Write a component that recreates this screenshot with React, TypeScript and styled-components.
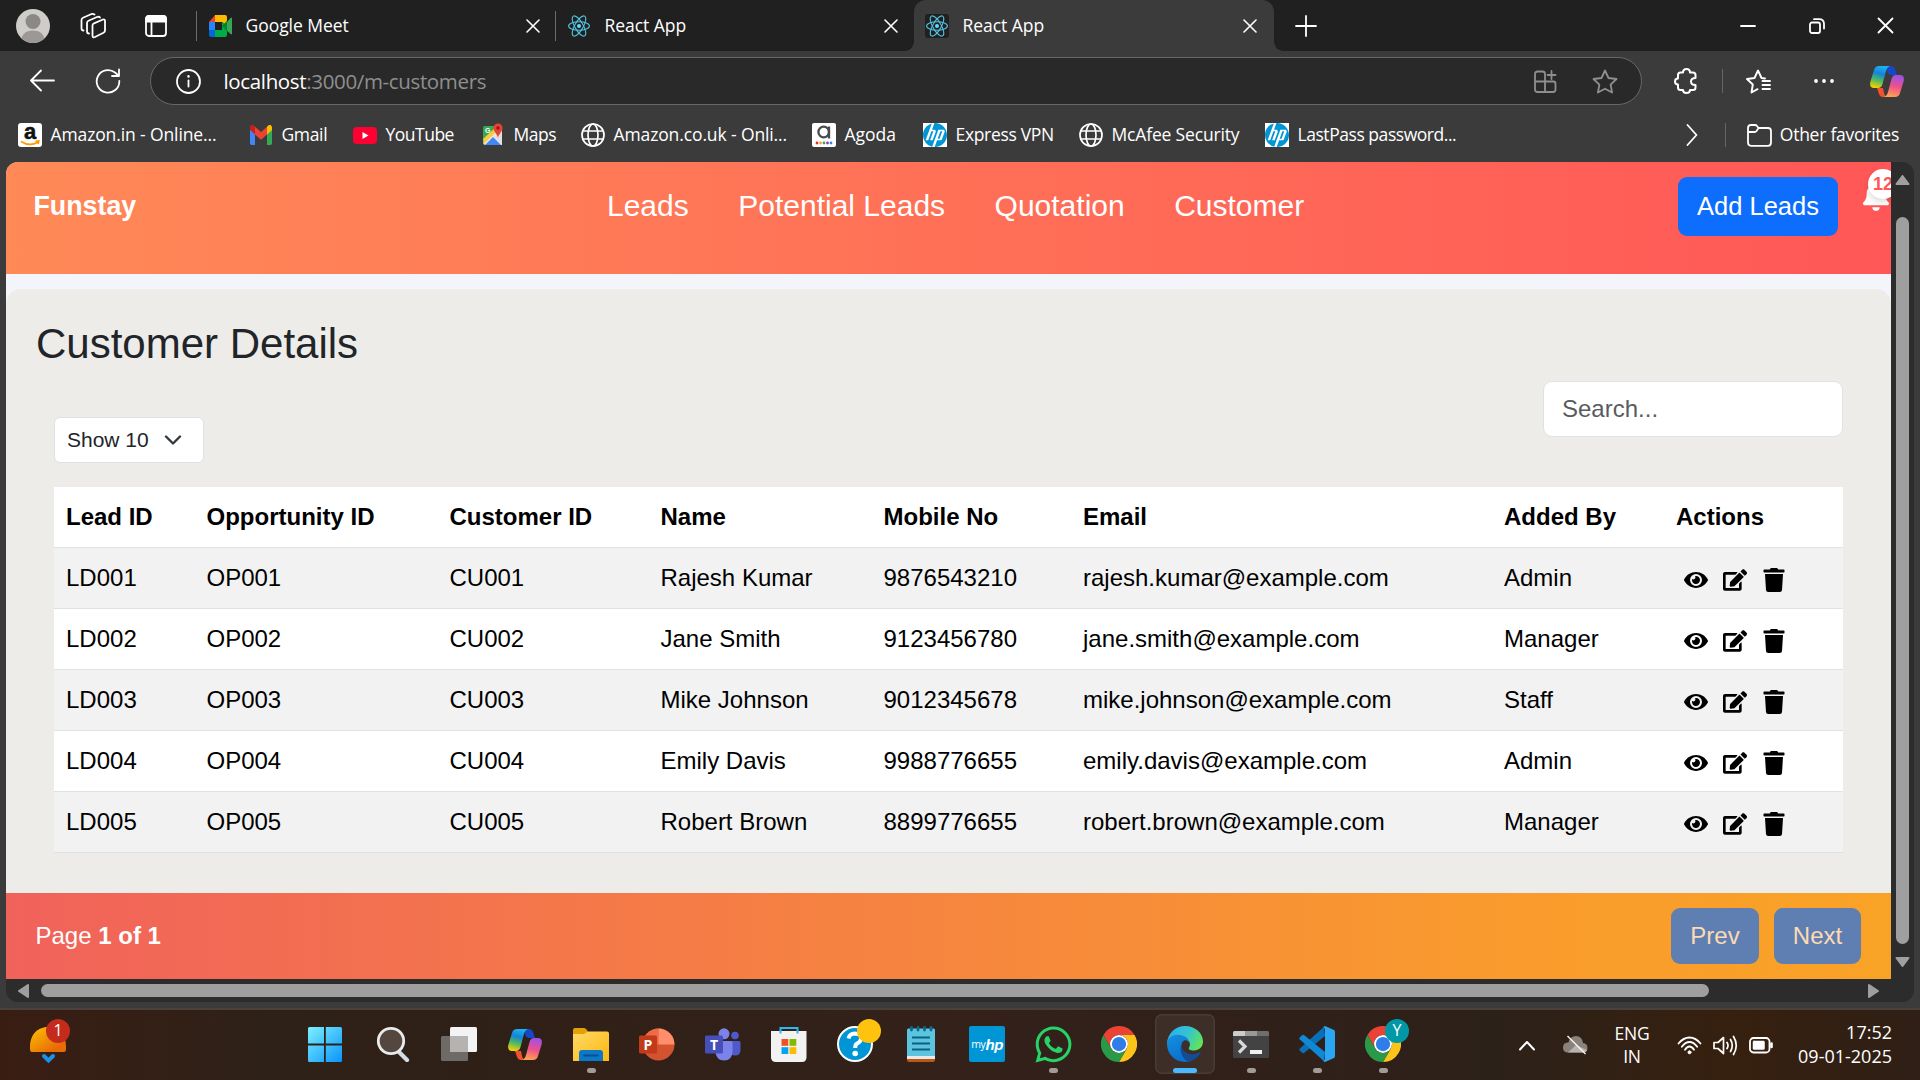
import React from "react";
import styled, { createGlobalStyle, css } from "styled-components";
import { FaEye, FaEdit, FaTrash, FaBell, FaWhatsapp } from "react-icons/fa";
import { SiHp } from "react-icons/si";

const GlobalStyle = createGlobalStyle`
  * { box-sizing: border-box; }
  html, body { margin: 0; padding: 0; overflow: hidden; background: #3b3b3b; }
  svg { display: block; flex: none; }
`;

const ui = `"Open Sans", "Noto Sans", sans-serif`;
const arial = `"Liberation Sans", Arial, sans-serif`;

const Screen = styled.div`
  width: 1920px;
  height: 1080px;
  display: flex;
  flex-direction: column;
  background: #3b3b3b;
  font-family: ${ui};
  color: #fff;
  overflow: hidden;
`;

/* ---------- browser chrome ---------- */

const TabStrip = styled.div`
  height: 51px;
  display: flex;
  align-items: center;
  background: #202020;
`;

const Slot = styled.div<{ $w: number }>`
  width: ${(p) => p.$w}px;
  height: 100%;
  display: flex;
  align-items: center;
  justify-content: center;
  flex: none;
`;

const TabItem = styled.div<{ $active?: boolean; $w: number }>`
  position: relative;
  width: ${(p) => p.$w}px;
  height: 51px;
  display: flex;
  align-items: center;
  gap: 13.5px;
  padding: 0 16px 0 11px;
  flex: none;
  ${(p) =>
    p.$active
      ? css`
          background: #3b3b3b;
          border-radius: 12px 12px 0 0;
          padding: 0 17px 0 11px;
          &::before,
          &::after {
            content: "";
            position: absolute;
            bottom: 0;
            width: 9px;
            height: 9px;
          }
          &::before {
            left: -9px;
            background: radial-gradient(circle at 0 0, transparent 8.5px, #3b3b3b 9px);
          }
          &::after {
            right: -9px;
            background: radial-gradient(circle at 100% 0, transparent 8.5px, #3b3b3b 9px);
          }
        `
      : css`
          &::before {
            content: "";
            position: absolute;
            left: -1px;
            top: 11px;
            width: 1px;
            height: 30px;
            background: #6b6b6b;
          }
        `}
`;

const TabTitle = styled.span`
  flex: 1;
  padding-bottom: 1px;
  font-size: 17.5px;
  letter-spacing: -0.05px;
  white-space: nowrap;
`;

const FavTile = styled.span<{ $tile?: boolean }>`
  width: 24px;
  height: 24px;
  display: flex;
  align-items: center;
  justify-content: center;
  border-radius: 3px;
  background: ${(p) => (p.$tile ? "#202020" : "transparent")};
`;

const Toolbar = styled.div`
  height: 60px;
  display: flex;
  align-items: center;
`;

const AddressBar = styled.div`
  width: 1492px;
  height: 48px;
  border: 1.5px solid #686868;
  border-radius: 24px;
  background: #292929;
  display: flex;
  align-items: center;
  padding: 0 23px 0 25px;
`;

const Url = styled.span`
  flex: 1;
  margin-left: 22.5px;
  font-size: 20.5px;
  letter-spacing: -0.35px;
  color: #8f8f8f;
  b {
    font-weight: 400;
    color: #fff;
  }
`;

const AddressIcons = styled.div`
  display: flex;
  align-items: center;
  gap: 35px;
`;

const Rule = styled.span`
  width: 1px;
  height: 24px;
  background: #666;
`;

const BookmarkBar = styled.div`
  height: 51px;
  padding: 0 21px 3px 18px;
  display: flex;
  align-items: center;
`;

const BookmarkItem = styled.div<{ $w: number }>`
  width: ${(p) => p.$w}px;
  display: flex;
  align-items: center;
  gap: 8.5px;
  flex: none;
`;

const BookmarkIcon = styled.span`
  width: 24px;
  display: flex;
  justify-content: center;
  flex: none;
`;

const BookmarkText = styled.span<{ $ls?: number }>`
  font-size: 17.5px;
  letter-spacing: ${(p) => p.$ls ?? -0.25}px;
  white-space: nowrap;
  padding-bottom: 2px;
`;

const BookmarkEnd = styled.div`
  margin-left: auto;
  display: flex;
  align-items: center;
  gap: 8px;
`;

const BookmarkArrow = styled.div`
  display: flex;
  align-items: center;
  gap: 27px;
  margin-right: 13px;
`;

const IconTile = styled.span<{ $round?: number }>`
  width: 24px;
  height: 24px;
  border-radius: ${(p) => p.$round ?? 0}px;
  background: #fff;
  color: #0096d6;
  display: flex;
  flex: none;
`;

/* ---------- page viewport ---------- */

const Viewport = styled.div`
  width: 1908px;
  height: 840px;
  margin-left: 6px;
  display: grid;
  grid-template-columns: 1885px 23px;
  grid-template-rows: 817px 23px;
  background: #2c2c2c;
  border-radius: 12px;
  overflow: hidden;
  flex: none;
`;

const Page = styled.main`
  overflow: hidden;
  background: #f3f5fa;
  font-family: ${arial};
  display: flex;
  flex-direction: column;
`;

const Header = styled.header`
  height: 112px;
  margin-bottom: 15px;
  padding: 15px 0 0 27.5px;
  display: flex;
  align-items: flex-start;
  background: linear-gradient(90deg, #ff8957, #ff5757);
  flex: none;
`;

const Brand = styled.div`
  width: 573.5px;
  font-size: 26.8px;
  font-weight: 700;
  line-height: 58px;
`;

const Nav = styled.nav`
  display: flex;
  gap: 49.5px;
  font-size: 30px;
  line-height: 58px;
  white-space: nowrap;
`;

const AddButton = styled.button`
  width: 160px;
  height: 59px;
  margin-left: auto;
  border: 0;
  border-radius: 9px;
  background: #0d6efd;
  color: #fff;
  font: 25.5px ${arial};
  padding: 0;
  flex: none;
`;

const BellBox = styled.div`
  position: relative;
  width: 28px;
  margin-left: 25px;
  padding-top: 4px;
  flex: none;
  svg {
    width: 26px;
    height: 30px;
  }
`;

const BellBadge = styled.span`
  position: absolute;
  left: 5px;
  top: -8px;
  width: 30px;
  height: 30px;
  border-radius: 50%;
  background: #fff;
  color: #ff5757;
  font-size: 18px;
  font-weight: 700;
  line-height: 30px;
  padding-left: 5px;
  box-shadow: 0 3px 6px rgba(0, 0, 0, 0.15);
`;

const Panel = styled.section`
  height: 604px;
  padding: 0 48px;
  background: #edece8;
  border-radius: 15px 15px 0 0;
  flex: none;
`;

const Title = styled.h2`
  margin: 0 0 0 -18px;
  padding-top: 30px;
  height: 92px;
  font-size: 42px;
  font-weight: 400;
  line-height: 50px;
  color: #212529;
`;

const Controls = styled.div`
  height: 106px;
  display: flex;
  justify-content: space-between;
`;

const PageSize = styled.div`
  width: 150px;
  height: 46px;
  margin-top: 36px;
  padding: 0 21px 0 12px;
  display: flex;
  align-items: center;
  justify-content: space-between;
  border: 1.5px solid #dee2e6;
  border-radius: 6px;
  background: #fff;
  color: #212529;
  font-size: 21px;
`;

const Search = styled.input`
  width: 300px;
  height: 56px;
  padding: 0 18px;
  border: 1.5px solid #dee2e6;
  border-radius: 9px;
  background: #fff;
  font: 24px ${arial};
  &::placeholder {
    color: #595c5f;
    opacity: 1;
  }
`;

const Table = styled.table`
  width: 1789px;
  table-layout: fixed;
  border-collapse: separate;
  border-spacing: 0;
  font-size: 24px;
  color: #000;
`;

const Cell = styled.td<{ $striped?: boolean }>`
  height: 61px;
  padding: 0 12px;
  line-height: 36px;
  background: ${(p) => (p.$striped ? "#f2f2f2" : "#fff")};
  border-bottom: 1px solid #dee2e6;
  white-space: nowrap;
`;

const HeadCell = styled(Cell)`
  font-weight: 700;
  text-align: left;
`;

const Actions = styled.div`
  display: flex;
  align-items: center;
  gap: 15px;
  padding: 4px 0 0 8px;
`;

const Footer = styled.footer`
  height: 86px;
  padding: 0 30px 0 29.5px;
  display: flex;
  align-items: center;
  gap: 15px;
  background: linear-gradient(90deg, #f1625b, #f99a2e 78%, #f9a326);
  font-size: 24px;
  flex: none;
`;

const PageInfo = styled.div`
  flex: 1;
`;

const PagerButton = styled.button<{ $w: number }>`
  width: ${(p) => p.$w}px;
  height: 56px;
  padding: 0;
  border: 0;
  border-radius: 9px;
  background: #5f7fb3;
  color: #fddab0;
  font: 24px ${arial};
`;

const VBar = styled.div`
  display: flex;
  flex-direction: column;
  align-items: center;
  padding-top: 13px;
`;

const VThumb = styled.div`
  width: 13px;
  height: 727px;
  margin: 32px 0 13px;
  border-radius: 7px;
  background: #9f9f9f;
`;

const HBar = styled.div`
  grid-column: 1 / 3;
  display: flex;
  align-items: center;
  padding-left: 12px;
`;

const HThumb = styled.div`
  width: 1668px;
  height: 13px;
  margin: 0 159px 0 12px;
  border-radius: 7px;
  background: #9f9f9f;
`;

/* ---------- taskbar ---------- */

const Taskbar = styled.div`
  height: 72px;
  margin-top: 6px;
  border-top: 2px solid #4b403a;
  background: linear-gradient(90deg, #391d13 0, #2e2118 14%, #302017 30%, #33211a 50%, #30201a 68%, #2c2119 78%, #36200f 90%, #2f1f16 100%);
  display: flex;
  flex: none;
`;

const Widgets = styled.div`
  position: relative;
  width: 292px;
  padding: 17px 0 0 30px;
`;

const Badge = styled.span<{ $x: number; $y: number; $bg: string }>`
  position: absolute;
  left: ${(p) => p.$x}px;
  top: ${(p) => p.$y}px;
  width: 24px;
  height: 24px;
  border-radius: 50%;
  background: ${(p) => p.$bg};
  font-size: 16px;
  line-height: 23px;
  text-align: center;
`;

const TaskButton = styled.div<{ $active?: boolean }>`
  position: relative;
  width: 60px;
  height: 60px;
  margin: 4px 3px;
  display: flex;
  align-items: center;
  justify-content: center;
  border-radius: 7px;
  flex: none;
  &:nth-child(2) {
    margin-right: 5px;
  }
  ${(p) =>
    p.$active &&
    css`
      background: #3d2e27;
      box-shadow: inset 0 0 0 1.5px #493c35;
    `}
`;

const RunMark = styled.span<{ $active?: boolean }>`
  position: absolute;
  bottom: 1px;
  left: ${(p) => (p.$active ? 18 : 25.5)}px;
  width: ${(p) => (p.$active ? 24 : 9)}px;
  height: 5px;
  border-radius: 3px;
  background: ${(p) => (p.$active ? "#4cb8ff" : "#a39b96")};
`;

const MyHp = styled.div`
  width: 36px;
  height: 36px;
  border-radius: 2px;
  background: #0096d6;
  display: flex;
  align-items: center;
  justify-content: center;
  font-size: 10.5px;
  letter-spacing: -0.3px;
  b {
    font: italic 700 15px ${arial};
    letter-spacing: -0.5px;
  }
`;

const Tray = styled.div`
  margin-left: auto;
  padding-right: 28px;
  height: 70px;
  display: flex;
  align-items: center;
  font-size: 18px;
  line-height: 24px;
  letter-spacing: 0;
`;

const Lang = styled.div`
  width: 40px;
  margin: 0 25px 0 24px;
  text-align: center;
  font-size: 17.5px;
  line-height: 23px;
  letter-spacing: -0.2px;
`;

const TrayIcons = styled.div`
  display: flex;
  align-items: center;
  gap: 11px;
  width: 114px;
`;

const Clock = styled.div`
  width: 101px;
  text-align: right;
  padding-bottom: 3px;
`;

/* ---------- drawings ---------- */

const stroke = { fill: "none", stroke: "#fff", strokeWidth: 1.8, strokeLinecap: "round", strokeLinejoin: "round" } as const;

const CloseX = () => (
  <svg width="14" height="14" viewBox="0 0 14 14" {...stroke} strokeWidth={1.6}>
    <path d="M1 1 13 13M13 1 1 13" />
  </svg>
);

const ReactLogo = () => (
  <svg width="22" height="24" viewBox="-11 -12 22 24" fill="none" stroke="#52c1de" strokeWidth="1.1">
    <circle r="2" fill="#61dafb" stroke="none" />
    <ellipse rx="10.400" ry="4.200" />
    <ellipse rx="11.400" ry="4.200" transform="rotate(60)" />
    <ellipse rx="11.400" ry="4.200" transform="rotate(120)" />
  </svg>
);

const MeetLogo = () => (
  <svg width="23" height="22" viewBox="0 0 23 19" preserveAspectRatio="none">
    <path d="M6 0V6H0Z" fill="#ea4335" />
    <path d="M0 6H6V13H0Z" fill="#2684fc" />
    <path d="M0 13H6V19H2Q0 19 0 17Z" fill="#0066da" />
    <path d="M6 0H16Q18 0 18 2V9.500L13 6H6Z" fill="#ffba00" />
    <path d="M6 19H16Q18 19 18 17V9.500L13 6V13H6Z" fill="#00ac47" />
    <path d="M18 6 21.500 2.500Q23 1.800 23 3V16Q23 17.200 21.500 16.500L18 13.500Z" fill="#34a853" />
    <path d="M13 9.500 18 5V14Z" fill="#00832d" />
  </svg>
);

const Avatar = () => (
  <svg width="34" height="34" viewBox="0 0 34 34">
    <clipPath id="av"><circle cx="17" cy="17" r="17" /></clipPath>
    <g clipPath="url(#av)">
      <rect width="34" height="34" fill="#cfcdca" />
      <circle cx="17" cy="12.500" r="7.500" fill="#8b8885" />
      <path d="M5 34C5 25 10 21.500 17 21.500S29 25 29 34Z" fill="#9b9895" />
    </g>
  </svg>
);

const Workspaces = () => (
  <svg width="26" height="26" viewBox="0 0 26 26" {...stroke}>
    <path d="M12.500 12.500Q12.500 11 14 10.300L23 6.500Q25 6 25 8V17.500Q25 19 23.500 19.800L15 24Q12.500 25 12.500 22.500Z" />
    <path d="M9 20.500Q7 20.500 7 18.500V10Q7 8.500 8.500 7.800L17 4Q19 3.300 20 4.500" />
    <path d="M3.500 17.500Q1.500 17.500 1.500 15.500V7Q1.500 5.500 3 4.800L11 1.200Q13 .5 14.500 1.500" />
  </svg>
);

const VerticalTabs = () => (
  <svg width="22" height="22" viewBox="0 0 22 22" {...stroke}>
    <rect x="1" y="1" width="20" height="20" rx="3" />
    <path d="M1 6.500V4Q1 1 4 1H18Q21 1 21 4V6.500Z" fill="#fff" />
    <path d="M6.500 7V20.500" />
  </svg>
);

const Globe = () => (
  <svg width="24" height="24" viewBox="0 0 24 24" {...stroke} strokeWidth={1.7}>
    <circle cx="12" cy="12" r="11" />
    <ellipse cx="12" cy="12" rx="5" ry="11" />
    <path d="M2 8H22M2 16H22" />
  </svg>
);

const AmazonLogo = () => (
  <IconTile $round={3}>
    <svg width="24" height="24" viewBox="0 0 24 24" overflow="visible">
      <text x="12" y="15.500" textAnchor="middle" fontFamily="Liberation Sans" fontWeight="700" fontSize="22" fill="#111" stroke="#111" strokeWidth=".5">a</text>
      <path d="M3 18.500Q11.500 24 20 19M17.500 18.300 20.800 18 20 21" fill="none" stroke="#ff9900" strokeWidth="1.700" />
    </svg>
  </IconTile>
);

const GmailLogo = () => (
  <svg width="22" height="20" viewBox="0 0 22 17" preserveAspectRatio="none">
    <path d="M0 3V15.500Q0 17 1.500 17H5V7Z" fill="#4285f4" />
    <path d="M22 3V15.500Q22 17 20.500 17H17V7Z" fill="#34a853" />
    <path d="M17 1.500V8L22 4.200V2.300C22 0 19.500-.8 18 .6Z" fill="#fbbc04" />
    <path d="M5 8V1.500L11 6 17 1.500V8L11 12.500Z" fill="#ea4335" />
    <path d="M0 2.300V4.200L5 8V1.500L4 .6C2.500-.8 0 0 0 2.300Z" fill="#c5221f" />
  </svg>
);

const YouTubeLogo = () => (
  <svg width="24" height="17" viewBox="0 0 24 17">
    <rect width="24" height="17" rx="4" fill="#ff0033" />
    <path d="M9.500 5V12L15.500 8.500Z" fill="#fff" />
  </svg>
);

const MapsLogo = () => (
  <svg width="22" height="24" viewBox="0 0 22 24">
    <rect x="1" y="3" width="19" height="19" rx="1.500" fill="#34a853" />
    <path d="M1 20 18 4 20 6V22H3Z" fill="#e8eaed" />
    <path d="M3 22 11 14 19 22Z" fill="#4285f4" />
    <path d="M1 16 14 4 17 6 2 21Z" fill="#fbcc3b" />
    <path d="M11.500 13.500 20 22V9Z" fill="#dfe1e5" />
    <text x="3" y="10" fontFamily="Liberation Sans" fontWeight="700" fontSize="7" fill="#fff">G</text>
    <path d="M16 15C15.500 11 11.500 9 11.500 5A4.500 4.500 0 0 1 20.500 5C20.500 9 16.500 11 16 15Z" fill="#ea4335" />
    <circle cx="16" cy="5" r="1.700" fill="#8e1a12" />
  </svg>
);

const AgodaLogo = () => (
  <IconTile $round={2}>
    <svg width="24" height="24" viewBox="0 0 24 24">
      <circle cx="11.700" cy="9" r="5.300" fill="none" stroke="#4a4a4c" strokeWidth="2.300" />
      <path d="M17 3.500V15.500" stroke="#4a4a4c" strokeWidth="2.300" />
      {["#e12d2d", "#f5a623", "#33a852", "#8e3bb5", "#3a85e0"].map((c, i) => (
        <circle key={c} cx={5 + i * 3.500} cy="20" r="1.400" fill={c} />
      ))}
    </svg>
  </IconTile>
);

const HpLogo = () => (
  <IconTile><SiHp size={24} /></IconTile>
);

const Copilot = ({ id }: { id: string }) => (
  <svg width="34" height="31" viewBox="0 0 34 31">
    <defs>
      <linearGradient id={id + "a"} x1=".6" y1="0" x2=".35" y2="1">
        <stop offset="0" stopColor="#1db4f0" /><stop offset=".35" stopColor="#1683d8" /><stop offset=".65" stopColor="#4bb866" /><stop offset="1" stopColor="#f5d000" />
      </linearGradient>
      <linearGradient id={id + "b"} x1=".6" y1="0" x2=".4" y2="1">
        <stop offset="0" stopColor="#9a52e8" /><stop offset=".5" stopColor="#ee4f8d" /><stop offset="1" stopColor="#ffa350" />
      </linearGradient>
    </defs>
    <path d="M17 0H21Q24 0 25 3L27 9H21Q18 9 17 5Z" fill="#1747c9" />
    <path d="M7 22H13L14 27Q15 31 18 31H13Q10 31 9 28Z" fill="#f4502f" />
    <path d="M9 0H20Q17 1 16 5L12.500 18Q11.500 22 8 22H4Q-.8 22 .3 16L4 4Q5 0 9 0Z" fill={`url(#${id}a)`} />
    <path d="M25 31H14Q17 30 18 26L21.500 13Q22.500 9 26 9H30Q34.800 9 33.700 15L30 27Q29 31 25 31Z" fill={`url(#${id}b)`} />
  </svg>
);

const Chrome = () => (
  <svg width="36" height="36" viewBox="0 0 48 48">
    <path d="M3.200 12A24 24 0 0 1 44.800 12H24A12 12 0 0 0 13.600 30Z" fill="#ea4335" />
    <path d="M44.800 12A24 24 0 0 1 24 48L34.400 30A12 12 0 0 0 24 12Z" fill="#fcc419" />
    <path d="M24 48A24 24 0 0 1 3.200 12L13.600 30A12 12 0 0 0 34.400 30Z" fill="#2b9a48" />
    <circle cx="24" cy="24" r="12" fill="#fff" />
    <circle cx="24" cy="24" r="9.500" fill="#2f7de9" />
  </svg>
);

const Edge = () => (
  <svg width="36" height="36" viewBox="0 0 36 36">
    <defs>
      <linearGradient id="e1" x1="0" y1=".3" x2="1" y2=".7"><stop offset="0" stopColor="#2bb0f0" /><stop offset=".5" stopColor="#35c4cf" /><stop offset="1" stopColor="#63e84e" /></linearGradient>
      <linearGradient id="e2" x1="0" y1="0" x2=".4" y2="1"><stop offset="0" stopColor="#1590dd" /><stop offset="1" stopColor="#0b70ce" /></linearGradient>
    </defs>
    <path d="M0 17C1 7 8.500 0 18 0C28 0 36 7 36 15.500C36 21 32 24.500 27 24.500C23 24.500 21 23.500 22 21.500C23 20 23.500 18 22 15L12 9Z" fill="url(#e1)" />
    <path d="M0 17C1 11 6 8.800 11 8.800C17 8.800 22.500 12.500 22.500 18C22 15 19 13.500 17 14.500C13 17 13.500 26 20 30L26 34Q22 36 18 36C8 36-.5 28 0 17Z" fill="url(#e2)" />
    <path d="M14.500 17.500C11.500 25 16 34 22 35.600C27 34.500 31 31.500 33.400 27.600C34 26.500 33 26 32 26.500C24 30.500 14 27 14.500 17.500Z" fill="#134c92" />
  </svg>
);

const VSCode = () => (
  <svg width="36" height="36" viewBox="0 0 36 36">
    <path d="M26 10 5 27Q4 27.500 3 26.700L.7 24.600Q0 23.700.7 22.800L25 .7Z" fill="#0b6fb8" />
    <path d="M26 26 5 9Q4 8.500 3 9.300L.7 11.400Q0 12.300.7 13.200L25 35.300Z" fill="#0f89d6" />
    <path d="M26 0 35 4Q36 4.500 36 6V30Q36 31.500 35 32L26 36Q25 36 24.500 35L26 33V3L24.500 1Q25 0 26 0Z" fill="#2ba6f2" />
  </svg>
);

const Start = () => (
  <svg width="34" height="35" viewBox="0 0 34 35">
    <linearGradient id="st" gradientUnits="userSpaceOnUse" x1="0" y1="0" x2="34" y2="35"><stop offset="0" stopColor="#7cf0ff" /><stop offset="1" stopColor="#0a94fb" /></linearGradient>
    <path d="M0 1.500Q0 0 1.500 0H16V16.500H0ZM17.800 0H32.500Q34 0 34 1.500V16.500H17.800ZM0 18.400H16V35H1.500Q0 35 0 33.500ZM17.800 18.400H34V33.500Q34 35 32.500 35H17.800Z" fill="url(#st)" />
  </svg>
);

const SearchGlass = () => (
  <svg width="36" height="36" viewBox="0 0 36 36">
    <path d="M24 26 32 34" stroke="#d3dde4" strokeWidth="4.200" strokeLinecap="round" />
    <circle cx="16" cy="15" r="12.700" fill="#54473f" stroke="#e9eaec" strokeWidth="2.800" />
  </svg>
);

const TaskView = () => (
  <svg width="36" height="34" viewBox="0 0 36 34">
    <rect x="9" width="27" height="25" rx="1.500" fill="#f3f3f3" />
    <rect y="9" width="27" height="25" rx="1.500" fill="#6d6a68" />
    <path d="M9 9H27V25H9Z" fill="#b5b3b1" />
  </svg>
);

const Explorer = () => (
  <svg width="36" height="33" viewBox="0 0 36 33">
    <linearGradient id="fx" x1="0" y1="0" x2="1" y2="1"><stop offset="0" stopColor="#ffd867" /><stop offset="1" stopColor="#fdb90f" /></linearGradient>
    <path d="M0 2Q0 0 2 0H11Q12.500 0 13.500 1.500L16 5V12H0Z" fill="#e2a00b" />
    <path d="M0 6H11L15 3.500H34Q36 3.500 36 5.500V33H0Z" fill="url(#fx)" />
    <path d="M6 33V25Q6 22 9 22H27Q30 22 30 25V33Z" fill="#0b78c9" />
    <path d="M11 27.500H25" stroke="#0a4f8d" strokeWidth="2" strokeLinecap="round" />
  </svg>
);

const PowerPoint = () => (
  <svg width="36" height="33" viewBox="0 0 36 33">
    <circle cx="19.500" cy="16.500" r="16" fill="#d35230" />
    <path d="M3.500 16.500A16 16 0 0 1 19.500.5V16.500Z" fill="#ed6c47" />
    <path d="M19.500.5A16 16 0 0 1 35.500 16.500H19.500Z" fill="#ff8f6b" />
    <rect x="0" y="7.500" width="18" height="18" rx="1.500" fill="#c13b1b" />
    <text x="9" y="21.500" textAnchor="middle" fontFamily="Open Sans" fontWeight="700" fontSize="14" fill="#fff">P</text>
  </svg>
);

const Teams = () => (
  <svg width="36" height="33" viewBox="0 0 36 33">
    <circle cx="30" cy="7.500" r="3.800" fill="#5059c9" />
    <path d="M24 13H34Q35.500 13 35.500 14.500V22Q35.500 27.500 30 27.500Q26 27.500 24 24Z" fill="#5059c9" />
    <circle cx="19" cy="5.800" r="5.500" fill="#7b83eb" />
    <path d="M11 13H26Q27.500 13 27.500 14.500V23Q27.500 32.500 19 32.500Q12 32.500 10.500 25Z" fill="#7b83eb" />
    <rect x="0" y="7.500" width="18" height="18" rx="1.500" fill="#464eb8" />
    <text x="9" y="21.500" textAnchor="middle" fontFamily="Open Sans" fontWeight="700" fontSize="14" fill="#fff">T</text>
  </svg>
);

const Store = () => (
  <svg width="36" height="36" viewBox="0 0 36 36">
    <path d="M9.500 8V2H26.500V8" fill="none" stroke="#2fb7f0" strokeWidth="2" />
    <path d="M0 5H35.500V31Q35.500 36 31 36H5Q0 36 0 31Z" fill="#f2f2f2" />
    <path d="M9.500 7.500V5M26.500 7.500V5" stroke="#2fb7f0" strokeWidth="2" />
    <path d="M10.500 13H17.300V19.800H10.500Z" fill="#f25022" />
    <path d="M18.500 13H25.300V19.800H18.500Z" fill="#7fba00" />
    <path d="M10.500 21.200H17.300V28H10.500Z" fill="#00a4ef" />
    <path d="M18.500 21.200H25.300V28H18.500Z" fill="#ffb900" />
  </svg>
);

const Help = () => (
  <svg width="36" height="36" viewBox="0 0 36 36">
    <circle cx="18" cy="18" r="17" fill="#0096d6" stroke="#fff" strokeWidth="2" />
    <path d="M11.500 12.500Q12.500 7.500 18 7.500Q24.500 8 24 13Q23.500 16 20 17.500Q18.200 18.500 18.200 22" fill="none" stroke="#fff" strokeWidth="4" />
    <circle cx="18.200" cy="27.500" r="2.800" fill="#fff" />
  </svg>
);

const Notepad = () => (
  <svg width="28" height="36" viewBox="0 0 28 36">
    <path d="M0 30H28V34Q28 36 26 36H2Q0 36 0 34Z" fill="#b85a15" />
    <path d="M0 29H28V33H0Z" fill="#e9e9ec" />
    <path d="M0 4Q0 2.500 1.500 2.500H26.500Q28 2.500 28 4V30H0Z" fill="#5cc4de" />
    <path d="M5 11.500H23M5 17.500H23M5 23.500H23" stroke="#0a6182" strokeWidth="1.800" />
    <path d="M4.500 1.500V4M11 1.500V4M17.500 1.500V4M24 1.500V4" stroke="#0b6a8e" strokeWidth="2.800" strokeLinecap="round" />
  </svg>
);

const Terminal = () => (
  <svg width="36" height="27" viewBox="0 0 36 27">
    <rect width="36" height="27" rx="1.500" fill="#434343" />
    <path d="M0 5V1.500Q0 0 1.500 0H12V5Z" fill="#ccc" />
    <path d="M12 0H24V5H12Z" fill="#999" />
    <path d="M24 0H34.500Q36 0 36 1.500V5H24Z" fill="#6f6f6f" />
    <path d="M6 9.500 12 15.500 6 21.500" fill="none" stroke="#d8d8d8" strokeWidth="3.200" />
    <path d="M17 19H29V23H17Z" fill="#f0f0f0" />
  </svg>
);

const WidgetBell = () => (
  <svg width="36" height="37" viewBox="0 0 36 37">
    <linearGradient id="wb" x1="0" y1="0" x2="1" y2="1"><stop offset="0" stopColor="#fcc400" /><stop offset=".8" stopColor="#e86a08" /></linearGradient>
    <path d="M0 20C0 6 9 0 18 0S36 6 36 20V22Q36 25 34 25H2Q0 25 0 22Z" fill="url(#wb)" />
    <path d="M14 29 18.500 33.500 23 29" fill="none" stroke="#1a93e6" strokeWidth="4" strokeLinecap="round" />
  </svg>
);

/* ---------- data ---------- */

const bookmarks = [
  { icon: <AmazonLogo />, label: "Amazon.in - Online...", w: 231, ls: -0.12 },
  { icon: <GmailLogo />, label: "Gmail", w: 104, ls: -0.35 },
  { icon: <YouTubeLogo />, label: "YouTube", w: 128, ls: -0.5 },
  { icon: <MapsLogo />, label: "Maps", w: 100, ls: -0.45 },
  { icon: <Globe />, label: "Amazon.co.uk - Onli...", w: 231, ls: -0.12 },
  { icon: <AgodaLogo />, label: "Agoda", w: 111, ls: 0 },
  { icon: <HpLogo />, label: "Express VPN", w: 156, ls: -0.33 },
  { icon: <Globe />, label: "McAfee Security", w: 186, ls: -0.17 },
  { icon: <HpLogo />, label: "LastPass password...", w: 220, ls: -0.45 },
];

const columns: [string, number][] = [
  ["Lead ID", 140.5],
  ["Opportunity ID", 243],
  ["Customer ID", 211],
  ["Name", 223],
  ["Mobile No", 199.5],
  ["Email", 421],
  ["Added By", 172],
  ["Actions", 179],
];

const customers = [
  ["LD001", "OP001", "CU001", "Rajesh Kumar", "9876543210", "rajesh.kumar@example.com", "Admin"],
  ["LD002", "OP002", "CU002", "Jane Smith", "9123456780", "jane.smith@example.com", "Manager"],
  ["LD003", "OP003", "CU003", "Mike Johnson", "9012345678", "mike.johnson@example.com", "Staff"],
  ["LD004", "OP004", "CU004", "Emily Davis", "9988776655", "emily.davis@example.com", "Admin"],
  ["LD005", "OP005", "CU005", "Robert Brown", "8899776655", "robert.brown@example.com", "Manager"],
];

const apps: { icon: React.ReactNode; running?: boolean; active?: boolean; badge?: React.ReactNode }[] = [
  { icon: <Start /> },
  { icon: <SearchGlass /> },
  { icon: <TaskView /> },
  { icon: <Copilot id="t" /> },
  { icon: <Explorer />, running: true },
  { icon: <PowerPoint /> },
  { icon: <Teams /> },
  { icon: <Store /> },
  { icon: <Help />, badge: <Badge $x={32} $y={5} $bg="#ffc20e" /> },
  { icon: <Notepad /> },
  { icon: <MyHp>my<b>hp</b></MyHp> },
  { icon: <FaWhatsapp size={41} color="#25d366" />, running: true },
  { icon: <Chrome /> },
  { icon: <Edge />, running: true, active: true },
  { icon: <Terminal />, running: true },
  { icon: <VSCode />, running: true },
  { icon: <Chrome />, running: true, badge: <Badge $x={32} $y={5} $bg="#0097a7">Y</Badge> },
];

const Tab = ({ icon, title, w, active }: { icon: React.ReactNode; title: string; w: number; active?: boolean }) => (
  <TabItem $w={w} $active={active}>
    <FavTile $tile={active}>{icon}</FavTile>
    <TabTitle>{title}</TabTitle>
    <CloseX />
  </TabItem>
);

export default function App() {
  return (
    <Screen>
      <GlobalStyle />
      <TabStrip>
        <Slot $w={66}><Avatar /></Slot>
        <Slot $w={54}><Workspaces /></Slot>
        <Slot $w={72}><VerticalTabs /></Slot>
        <Slot $w={5} />
        <Tab icon={<MeetLogo />} title="Google Meet" w={359} />
        <Tab icon={<ReactLogo />} title="React App" w={358} />
        <Tab icon={<ReactLogo />} title="React App" w={360} active />
        <Slot $w={64}>
          <svg width="22" height="22" viewBox="0 0 22 22" {...stroke}><path d="M11 1V21M1 11H21" /></svg>
        </Slot>
        <Slot $w={375} />
        <Slot $w={69}>
          <svg width="16" height="4" viewBox="0 0 16 4" {...stroke}><path d="M1 2H15" /></svg>
        </Slot>
        <Slot $w={69}>
          <svg width="16" height="16" viewBox="0 0 16 16" {...stroke}>
            <rect x="1" y="4.500" width="10" height="10.500" rx="2" />
            <path d="M5 1.200H10Q15 1.200 15 6V10.500" />
          </svg>
        </Slot>
        <Slot $w={69}>
          <svg width="17" height="17" viewBox="0 0 17 17" {...stroke}><path d="M1.500 1.500 15.500 15.500M15.500 1.500 1.500 15.500" /></svg>
        </Slot>
      </TabStrip>

      <Toolbar>
        <Slot $w={84}>
          <svg width="26" height="24" viewBox="0 0 26 24" {...stroke}><path d="M25 11.500H2M12 1.500 2 11.500 12 21.500" /></svg>
        </Slot>
        <Slot $w={47}>
          <svg width="26" height="26" viewBox="0 0 26 26" {...stroke}><path d="M24.300 13A11.300 11.300 0 1 1 20 4.500L23.500 7.500M24 1.500V8H17" /></svg>
        </Slot>
        <Slot $w={19} />
        <AddressBar>
          <svg width="25" height="25" viewBox="0 0 25 25" {...stroke}>
            <circle cx="12.500" cy="12.500" r="11.500" /><path d="M12.500 11.500V17.500" /><path d="M12.500 7.300V7.500" strokeWidth="2.400" />
          </svg>
          <Url><b>localhost</b>:3000/m-customers</Url>
          <AddressIcons>
            <svg width="23" height="23" viewBox="0 0 23 23" {...stroke} stroke="#8f8f8f">
              <path d="M1 11.500V4Q1 1.500 3.500 1.500H8.500Q11 1.500 11 4V22H3.500Q1 22 1 19.500V11.500H19.500Q21.500 11.500 21.500 14V19.500Q21.500 22 19 22H11M17.500 1V9M13.500 5H21.500" />
            </svg>
            <svg width="26" height="25" viewBox="0 0 26 25" {...stroke} stroke="#8f8f8f">
              <path d="M13 1.500 16.500 9 24.500 10 18.600 15.600 20.100 23.500 13 19.700 5.900 23.500 7.400 15.600 1.500 10 9.500 9Z" />
            </svg>
          </AddressIcons>
        </AddressBar>
        <Slot $w={7} />
        <Slot $w={73}>
          <svg width="24" height="26" viewBox="0 0 24 26" {...stroke} strokeWidth={2}>
            <path d="M6.500 4.500H9Q9 1 12.500 1T16 4.500H19Q21.500 4.500 21.500 7V10Q17 10 17 13.500T21.500 17V19.500Q21.500 22 19 22H16Q16 25 12.500 25T9 22H6.500Q4 22 4 19.500V16.500Q1 16.500 1 13.500T4 10.500V7Q4 4.500 6.500 4.500Z" />
          </svg>
        </Slot>
        <Rule />
        <Slot $w={71}>
          <svg width="25" height="25" viewBox="0 0 25 25" {...stroke} strokeWidth={1.9}>
            <path d="M19 9.500 15.500 9 12 1.500 8.500 9 1 10 6.800 15.500 5.500 23.500 11.500 20.200M16.500 12H24M16.500 16H24M16.500 20H24" />
          </svg>
        </Slot>
        <Slot $w={60}>
          <svg width="22" height="6" viewBox="0 0 22 6" fill="#fff"><circle cx="3" cy="3" r="1.900" /><circle cx="11" cy="3" r="1.900" /><circle cx="19" cy="3" r="1.900" /></svg>
        </Slot>
        <Slot $w={65}><Copilot id="c" /></Slot>
      </Toolbar>

      <BookmarkBar>
        {bookmarks.map((b) => (
          <BookmarkItem key={b.label} $w={b.w}>
            <BookmarkIcon>{b.icon}</BookmarkIcon>
            <BookmarkText $ls={b.ls}>{b.label}</BookmarkText>
          </BookmarkItem>
        ))}
        <BookmarkEnd>
          <BookmarkArrow>
            <svg width="12" height="22" viewBox="0 0 12 22" {...stroke}><path d="M1.500 1 10.500 11 1.500 21" /></svg>
            <Rule />
          </BookmarkArrow>
          <svg width="25" height="23" viewBox="0 0 25 23" {...stroke}>
            <path d="M1 18.500V4Q1 1 4 1H8Q9.300 1 10 2L11.500 4H21Q24 4 24 7V18.500Q24 21.800 21 21.800H4Q1 21.800 1 18.500ZM1 8H7.500Q8.800 8 9.500 7L11.500 4" />
          </svg>
          <BookmarkText>Other favorites</BookmarkText>
        </BookmarkEnd>
      </BookmarkBar>

      <Viewport>
        <Page>
          <Header>
            <Brand>Funstay</Brand>
            <Nav>
              <span>Leads</span>
              <span>Potential Leads</span>
              <span>Quotation</span>
              <span>Customer</span>
            </Nav>
            <AddButton>Add Leads</AddButton>
            <BellBox>
              <FaBell />
              <BellBadge>12</BellBadge>
            </BellBox>
          </Header>
          <Panel>
            <Title>Customer Details</Title>
            <Controls>
              <PageSize>
                Show 10
                <svg width="18" height="10" viewBox="0 0 18 10" {...stroke} stroke="#343a40" strokeWidth={2.400}><path d="M2 1.500 9 8.500 16 1.500" /></svg>
              </PageSize>
              <Search placeholder="Search..." />
            </Controls>
            <Table>
              <colgroup>
                {columns.map(([name, w]) => <col key={name} width={w} />)}
              </colgroup>
              <thead>
                <tr>{columns.map(([name]) => <HeadCell as="th" key={name}>{name}</HeadCell>)}</tr>
              </thead>
              <tbody>
                {customers.map((row, i) => (
                  <tr key={row[0]}>
                    {row.map((value) => <Cell key={value} $striped={i % 2 === 0}>{value}</Cell>)}
                    <Cell $striped={i % 2 === 0}>
                      <Actions><FaEye size={24} /><FaEdit size={24} /><FaTrash size={24} /></Actions>
                    </Cell>
                  </tr>
                ))}
              </tbody>
            </Table>
          </Panel>
          <Footer>
            <PageInfo>Page <b>1 of 1</b></PageInfo>
            <PagerButton $w={88}>Prev</PagerButton>
            <PagerButton $w={87}>Next</PagerButton>
          </Footer>
        </Page>
        <VBar>
          <svg width="15" height="10" viewBox="0 0 15 10"><path d="M7.500 1 13.500 9H1.500Z" fill="#9f9f9f" stroke="#9f9f9f" strokeWidth="2" strokeLinejoin="round" /></svg>
          <VThumb />
          <svg width="15" height="10" viewBox="0 0 15 10"><path d="M7.500 9 13.500 1H1.500Z" fill="#9f9f9f" stroke="#9f9f9f" strokeWidth="2" strokeLinejoin="round" /></svg>
        </VBar>
        <HBar>
          <svg width="11" height="14" viewBox="0 0 11 14"><path d="M1 7 10 1V13Z" fill="#9f9f9f" stroke="#9f9f9f" strokeWidth="2" strokeLinejoin="round" /></svg>
          <HThumb />
          <svg width="11" height="14" viewBox="0 0 11 14"><path d="M10 7 1 1V13Z" fill="#9f9f9f" stroke="#9f9f9f" strokeWidth="2" strokeLinejoin="round" /></svg>
        </HBar>
      </Viewport>

      <Taskbar>
        <Widgets>
          <WidgetBell />
          <Badge $x={46} $y={9} $bg="#c42b1c">1</Badge>
        </Widgets>
        {apps.map((a, i) => (
          <TaskButton key={i} $active={a.active}>
            {a.icon}
            {a.badge}
            {a.running && <RunMark $active={a.active} />}
          </TaskButton>
        ))}
        <Tray>
          <svg width="18" height="11" viewBox="0 0 18 11" {...stroke} strokeWidth={2}><path d="M2 9.500 9 2 16 9.500" /></svg>
          <Slot $w={27} />
          <svg width="25" height="20" viewBox="0 0 25 20">
            <path d="M5 17.500Q0 17.500 0 12.500T5.500 7.500Q7 1 13 1T20 8Q24.500 8.500 24.500 13T20 17.500Z" fill="#8b827c" />
            <path d="M5 17.500 13 10 24 15Q23 17.500 20 17.500Z" fill="#b9b3af" />
            <path d="M4.500 1 22.500 19" stroke="#f5f5f5" strokeWidth="1.500" />
          </svg>
          <Lang>ENG<br />IN</Lang>
          <TrayIcons>
            <svg width="25" height="19" viewBox="0 0 25 19" {...stroke}>
              <path d="M1.500 7.500Q6.500 1.500 12.500 1.500T23.500 7.500M4.800 10.800Q8.300 6 12.500 6T20.200 10.800M8 13.700Q10 10.500 12.500 10.500T17 13.700" />
              <circle cx="12.500" cy="16.300" r="1.500" fill="#fff" strokeWidth="1" />
            </svg>
            <svg width="25" height="21" viewBox="0 0 25 21" {...stroke} strokeWidth={1.700}>
              <path d="M1 7.500V13.500H5L10.500 18.500V2.500L5 7.500ZM14 7.500Q16 10.500 14 13.500M17.500 4.500Q21 10.500 17.500 16.500M20.500 1.500Q26 10.500 20.500 19.500" />
            </svg>
            <svg width="25" height="17" viewBox="0 0 25 17" {...stroke}>
              <rect x="1" y="1" width="19.500" height="14.500" rx="3.500" />
              <rect x="4" y="4" width="11.500" height="8.500" rx="1" fill="#fff" strokeWidth=".5" />
              <path d="M22.500 6.500V10" strokeWidth="2.600" />
            </svg>
          </TrayIcons>
          <Clock>17:52<br />09-01-2025</Clock>
        </Tray>
      </Taskbar>
    </Screen>
  );
}
